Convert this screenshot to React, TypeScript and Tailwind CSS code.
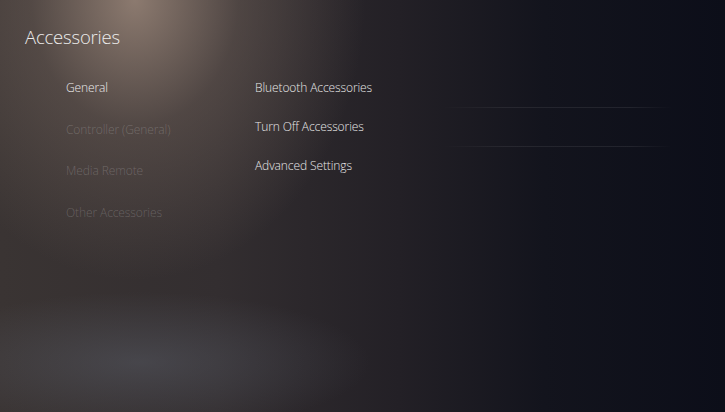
import React from 'react';

const leftMenu = [
  { label: "General", active: true },
  { label: "Controller (General)", active: false },
  { label: "Media Remote", active: false },
  { label: "Other Accessories", active: false },
];

const options = ["Bluetooth Accessories", "Turn Off Accessories", "Advanced Settings"];

const App = () => {
  return (
    <div className="relative w-[725px] h-[412px] overflow-hidden bg-[#0d0f1a] font-['Open_Sans',sans-serif] text-white">
      {/* background lighting */}
      <div className="absolute inset-0 bg-[linear-gradient(90deg,#3a3433_0%,#332e30_30%,#232026_55%,#13141d_75%,#0c0e19_100%)]" />
      <div className="absolute inset-0 bg-[radial-gradient(ellipse_230px_280px_at_135px_0px,rgba(155,135,122,0.85)_0%,rgba(115,100,92,0.45)_45%,transparent_100%)]" />
      <div className="absolute inset-0 bg-[radial-gradient(ellipse_230px_70px_at_140px_362px,rgba(95,100,112,0.42)_0%,transparent_100%)]" />

      <div className="relative flex flex-col">
        <h1 className="pl-[25px] pt-[24px] text-[18.5px] font-light leading-[26px] tracking-[-0.2px] text-[#ededed]">
          Accessories
        </h1>

        <div className="flex pt-[27px]">
          <ul className="w-[255px] pl-[66px] flex flex-col gap-[20.5px]">
            {leftMenu.map((item) => (
              <li
                key={item.label}
                className={`text-[12px] font-light leading-[21px] tracking-[-0.1px] ${item.active ? "text-[#ececec]" : "text-white/20"}`}
              >
                {item.label}
              </li>
            ))}
          </ul>

          <ul className="w-[417px] flex flex-col">
            {options.map((opt, i) => (
              <li key={opt} className="flex flex-col">
                <span className="text-[12px] font-light leading-[21px] tracking-[-0.1px] text-[#e8e8e8]">{opt}</span>
                {i < options.length - 1 && (
                  <div className="mt-[9px] mb-[8px] h-px bg-[linear-gradient(90deg,transparent_0%,transparent_45%,rgba(255,255,255,0.07)_60%,rgba(255,255,255,0.08)_90%,transparent_100%)]" />
                )}
              </li>
            ))}
          </ul>
        </div>
      </div>
    </div>
  );
};

export default App;
